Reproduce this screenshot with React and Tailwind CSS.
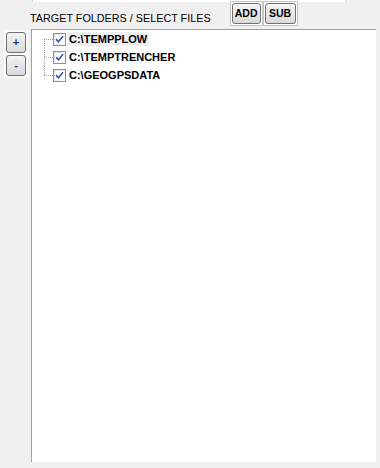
import React from 'react';

const folders = [
    { name: 'C:\\TEMPPLOW', selected: true },
    { name: 'C:\\TEMPTRENCHER', selected: false },
    { name: 'C:\\GEOGPSDATA', selected: false },
];

function CheckBox() {
    return (
        <div className="w-[13px] h-[13px] border border-[#8e8f8f] bg-gradient-to-br from-[#dcdcdc] to-[#ffffff] p-[1px] shrink-0">
            <div className="w-full h-full bg-white flex items-center justify-center">
                <svg width="9" height="9" viewBox="0 0 9 9">
                    <path d="M1 4.2 L3.4 6.8 L8 1.2" fill="none" stroke="#3355b3" strokeWidth="1.7" />
                </svg>
            </div>
        </div>
    );
}

function ToolButton({ label, width }) {
    return (
        <div className="border border-[#c4c4c4] bg-white p-[1px]">
            <button
                className={`${width} h-[21px] rounded-[3px] border border-[#707070] bg-gradient-to-b from-[#f4f4f4] to-[#dadada] text-[10.5px] font-bold leading-none text-black flex items-center justify-center`}
            >
                {label}
            </button>
        </div>
    );
}

function SideButton({ label }) {
    return (
        <button className="w-[20px] h-[21px] rounded-[3px] border border-[#707070] bg-gradient-to-b from-[#f4f4f4] to-[#dadada] text-[11px] font-bold leading-none text-[#1a3a8a] flex items-center justify-center">
            {label}
        </button>
    );
}

export default function App() {
    return (
        <div className="w-[380px] h-[468px] bg-[#f0f0f0] flex flex-col font-['Liberation_Sans',Arial,sans-serif] overflow-hidden">
            {/* thin strip left from the panel above */}
            <div className="ml-[32px] w-[314px] h-[2px] bg-white border-l border-r border-[#d8d8d8] shrink-0" />

            {/* header */}
            <div className="h-[27px] flex items-start shrink-0">
                <span className="ml-[30px] mt-[10px] text-[10.8px] leading-[13px] text-black whitespace-nowrap">
                    TARGET FOLDERS / SELECT FILES
                </span>
                <div className="ml-[19px] -mt-[1px] flex">
                    <ToolButton label="ADD" width="w-[29px]" />
                    <ToolButton label="SUB" width="w-[31px]" />
                </div>
            </div>

            {/* body */}
            <div className="flex flex-1 pb-[6px] min-h-0">
                <div className="w-[31px] shrink-0">
                    <div className="ml-[4px] mt-[1px] w-[24px] p-[2px] bg-[#f9f9f9] flex flex-col gap-[2px]">
                        <SideButton label="+" />
                        <SideButton label="-" />
                    </div>
                </div>

                {/* tree */}
                <div className="flex-1 mr-[4px] bg-white border-t border-l border-[#a0a0a0]">
                    {folders.map((f, i) => {
                        const first = i === 0;
                        const last = i === folders.length - 1;
                        return (
                            <div key={f.name} className="flex items-center h-[18px]">
                                <div className="ml-[12px] w-[9px] h-[18px] flex flex-col shrink-0">
                                    <div className={first ? 'h-[9px]' : 'h-[9px] border-l border-dotted border-[#a0a0a0]'} />
                                    <div
                                        className={
                                            last
                                                ? 'h-[9px] border-t border-dotted border-[#a0a0a0]'
                                                : 'h-[9px] border-t border-l border-dotted border-[#a0a0a0]'
                                        }
                                    />
                                </div>
                                <CheckBox />
                                <span
                                    className={`ml-[1px] px-[2px] h-[14px] flex items-center text-[11px] font-bold text-black ${
                                        f.selected ? 'bg-[#efefef]' : ''
                                    }`}
                                >
                                    {f.name}
                                </span>
                            </div>
                        );
                    })}
                </div>
            </div>
        </div>
    );
}
